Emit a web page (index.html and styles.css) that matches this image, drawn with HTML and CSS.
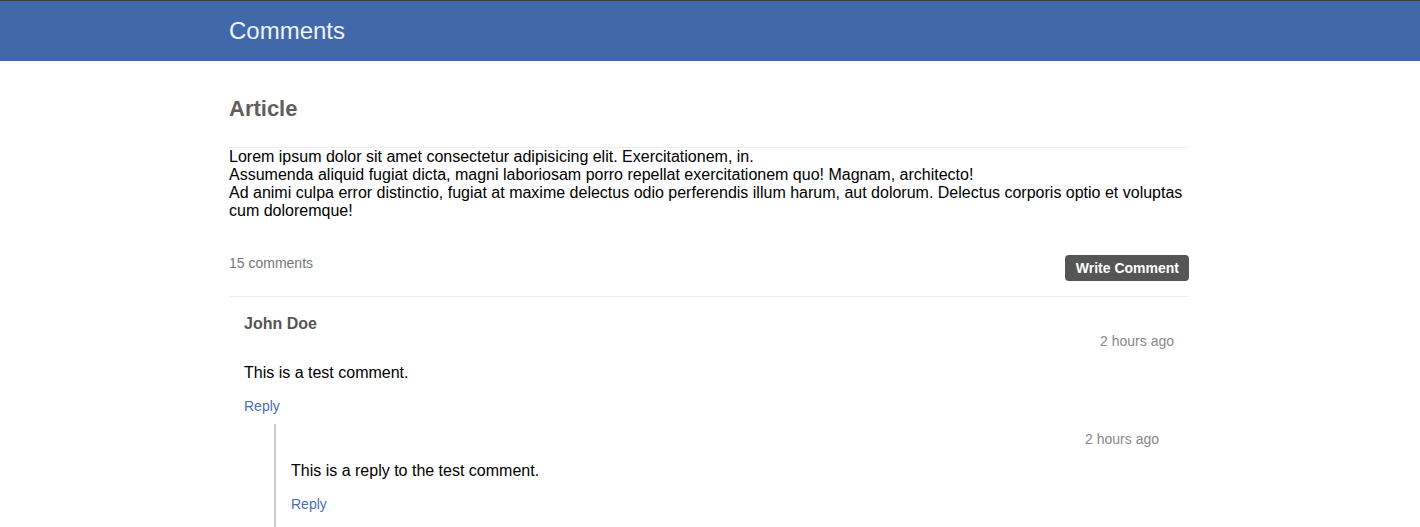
FILE: index.html
```html
<!DOCTYPE html>
<html lang="en">
<head>
<meta charset="utf-8">
<title>Comments</title>
<link rel="stylesheet" href="styles.css">
</head>
<body>
<header class="topbar">
  <div class="container">
    <h1 class="brand">Comments</h1>
  </div>
</header>
<main class="container">
  <h2 class="article-title">Article</h2>
  <div class="article-body">
    <p>Lorem ipsum dolor sit amet consectetur adipisicing elit. Exercitationem, in.<br>
    Assumenda aliquid fugiat dicta, magni laboriosam porro repellat exercitationem quo! Magnam, architecto!<br>
    Ad animi culpa error distinctio, fugiat at maxime delectus odio perferendis illum harum, aut dolorum. Delectus corporis optio et voluptas cum doloremque!</p>
  </div>
  <div class="comments-bar">
    <span class="count">15 comments</span>
    <button class="write-btn">Write Comment</button>
  </div>
  <div class="comment">
    <div class="author">John Doe</div>
    <div class="time">2 hours ago</div>
    <p class="text">This is a test comment.</p>
    <a class="reply" href="#">Reply</a>
    <div class="comment nested">
      <div class="time">2 hours ago</div>
      <p class="text">This is a reply to the test comment.</p>
      <a class="reply" href="#">Reply</a>
    </div>
  </div>
</main>
</body>
</html>
```
FILE: styles.css
```css
* { box-sizing: border-box; }
body {
  margin: 0;
  font-family: "Liberation Sans", Arial, sans-serif;
  color: #000;
  background: #fff;
}
.container {
  width: 960px;
  margin-left: calc(50% - 481px);
}
.topbar {
  background: #4169aa;
  border-top: 1px solid #3d3d3d;
  height: 61px;
}
.brand {
  margin: 0;
  font-size: 24px;
  font-weight: normal;
  line-height: 59px;
  color: #eef2fa;
}
.article-title {
  margin: 35px 0 26px;
  font-size: 22px;
  line-height: 25px;
  font-weight: bold;
  color: #635e5e;
}
.article-body {
  border-top: 1px solid #eeeeee;
}
.article-body p {
  margin: 0;
  font-size: 16px;
  line-height: 18px;
}
.comments-bar {
  display: flex;
  justify-content: space-between;
  align-items: flex-start;
  margin-top: 33px;
  padding-bottom: 15px;
  border-bottom: 1px solid #eeeeee;
}
.count {
  font-size: 14px;
  line-height: 20px;
  color: #777;
}
.write-btn {
  margin-top: 2px;
  height: 26px;
  padding: 0 10px 0 11px;
  border: none;
  border-radius: 4px;
  background: #555;
  color: #fff;
  font-family: "Liberation Sans", Arial, sans-serif;
  font-size: 14px;
  font-weight: bold;
}
.comment {
  padding: 18px 15px 0;
}
.author {
  font-size: 16px;
  line-height: 17px;
  font-weight: bold;
  color: #555;
}
.time {
  text-align: right;
  font-size: 14px;
  line-height: 18px;
  color: #888;
}
.text {
  margin: 14px 0 0;
  font-size: 16px;
  line-height: 18px;
}
.reply {
  display: block;
  margin-top: 15px;
  font-size: 14px;
  line-height: 18px;
  color: #4a70b0;
  text-decoration: none;
}
.nested {
  margin: 9px 0 0 30px;
  padding: 6px 15px 20px;
  border-left: 2px solid #cccccc;
}
```
